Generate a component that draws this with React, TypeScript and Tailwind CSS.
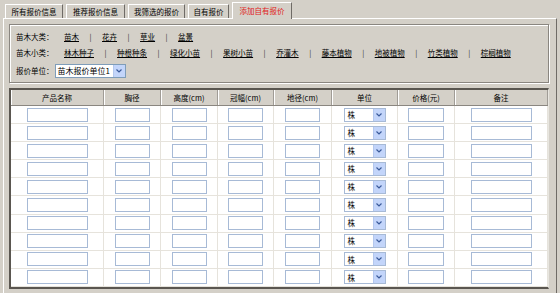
import React from 'react';

const TABS = [
  { label: '所有报价信息', w: 'w-[58px]' },
  { label: '推荐报价信息', w: 'w-[59px]' },
  { label: '我筛选的报价', w: 'w-[57px]' },
  { label: '自有报价', w: 'w-[41px]' },
];

const BIG = ['苗木', '花卉', '草业', '盆景'];
const SMALL = ['林木种子', '种根种条', '绿化小苗', '果树小苗', '乔灌木', '藤本植物', '地被植物', '竹类植物', '棕榈植物'];

// column header, width, input width ('' = unit select)
const COLS: [string, string, string][] = [
  ['产品名称', 'w-[93px]', 'w-[61px]'],
  ['胸径', 'w-[57px]', 'w-[35px]'],
  ['高度(cm)', 'w-[57px]', 'w-[35px]'],
  ['冠幅(cm)', 'w-[56px]', 'w-[35px]'],
  ['地径(cm)', 'w-[58px]', 'w-[35px]'],
  ['单位', 'w-[66px]', ''],
  ['价格(元)', 'w-[57px]', 'w-[36px]'],
  ['备注', 'w-[93px]', 'w-[61px]'],
];

function Arrow() {
  return (
    <span className="flex h-full w-[12px] items-center justify-center bg-[#c3d5fa] border-l border-[#b4c8ee]">
      <svg width="6" height="4" viewBox="0 0 6 4">
        <path d="M0.5 0.5 L3 3 L5.5 0.5" fill="none" stroke="#3a5a9a" strokeWidth="1.2" />
      </svg>
    </span>
  );
}

function Sep() {
  return <span className="text-[#333]">|</span>;
}

export default function App() {
  const rows = Array.from({ length: 10 });
  return (
    <div className="w-[560px] h-[293px] overflow-hidden bg-[#d4d0c8] text-[7.5px] leading-none text-black font-['Noto_Sans_CJK_SC','Noto_Sans',sans-serif]">
      {/* Tabs */}
      <div className="flex items-end gap-[3px] pl-[5px] pt-[3px] h-[19px]">
        {TABS.map((t) => (
          <div
            key={t.label}
            className={`${t.w} h-[14px] flex items-center justify-center border-t border-l border-white border-r border-r-[#6f6b66] mb-[1px]`}
          >
            {t.label}
          </div>
        ))}
        <div className="w-[60px] h-[17px] flex items-center justify-center text-[#e02020] border-t border-l border-white border-r border-r-[#6f6b66] bg-[#d4d0c8] relative z-10">
          添加自有报价
        </div>
      </div>

      {/* Panel */}
      <div className="mx-[3px] -mt-[1px] h-[280px] border-t border-l border-white border-r border-r-[#6f6b66] px-[5px] pt-[5px]">
        {/* Filter box */}
        <div className="h-[59px] w-[540px] border border-[#8a8680] shadow-[inset_1px_1px_0_#fff,1px_1px_0_#fff] pl-[6px] pt-[5px]">
          <div className="flex items-center h-[14px] gap-[10.5px]">
            <span>苗木大类：</span>
            {BIG.map((b, i) => (
              <React.Fragment key={b}>
                {i > 0 && <Sep />}
                <span className="underline">{b}</span>
              </React.Fragment>
            ))}
          </div>
          <div className="flex items-center h-[14px] mt-[2px] gap-[10.5px]">
            <span>苗木小类：</span>
            {SMALL.map((b, i) => (
              <React.Fragment key={b}>
                {i > 0 && <Sep />}
                <span className="underline">{b}</span>
              </React.Fragment>
            ))}
          </div>
          <div className="flex items-center h-[14px] mt-[4px]">
            <span>报价单位：</span>
            <div className="ml-[1px] flex h-[14px] w-[71px] items-center justify-between border border-[#7f9db9] bg-white pl-[2px]">
              <span className="text-[8px]">苗木报价单位1</span>
              <Arrow />
            </div>
          </div>
        </div>

        {/* Table */}
        <div className="mt-[5px] h-[201px] w-[540px] overflow-hidden border-t-2 border-l-2 border-t-[#5a5650] border-l-[#5a5650] border-r border-r-[#e8e6e0] border-b-2 border-b-[#5a5650] bg-white">
          <div className="flex h-[16px] bg-[#d4d0c8] border-b border-[#8a8680]">
            {COLS.map(([h, w]) => (
              <div
                key={h}
                className={`${w} flex items-center justify-center border-r border-[#a09c96] shadow-[inset_1px_0_0_#fff]`}
              >
                {h}
              </div>
            ))}
          </div>
          {rows.map((_, r) => (
            <div key={r} className="flex h-[18.1px] border-b border-[#e6e3dc]">
              {COLS.map(([h, w, iw]) => (
                <div key={h} className={`${w} flex items-center justify-center border-r border-[#e6e3dc]`}>
                  {iw ? (
                    <input
                      type="text"
                      className={`${iw} h-[14px] border border-[#a7bad6] bg-white outline-none`}
                    />
                  ) : (
                    <div className="flex h-[14px] w-[42px] items-center justify-between border border-[#a7bad6] bg-white pl-[3px]">
                      <span>株</span>
                      <Arrow />
                    </div>
                  )}
                </div>
              ))}
            </div>
          ))}
        </div>
      </div>
    </div>
  );
}
